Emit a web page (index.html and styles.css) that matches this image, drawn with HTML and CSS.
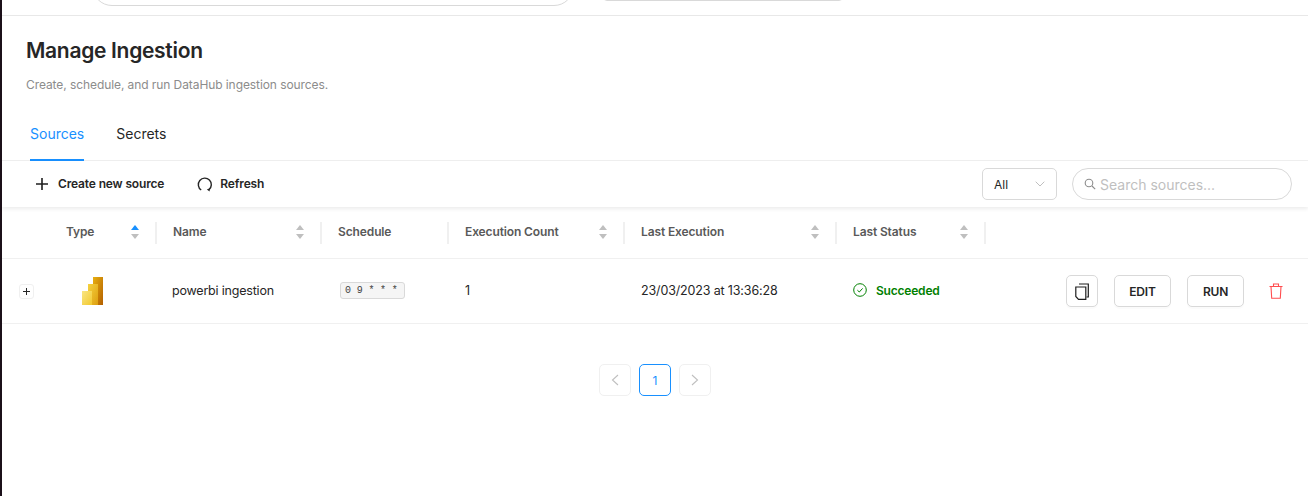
FILE: index.html
```html
<!DOCTYPE html>
<html lang="en">
<head>
    <meta charset="UTF-8">
    <title>Manage Ingestion</title>
    <link rel="stylesheet" href="styles.css">
</head>
<body>
<div class="page">
    <div class="topbar">
        <div class="top-search"></div>
        <div class="top-select"></div>
    </div>
    <div class="heading">
        <h1>Manage Ingestion</h1>
        <p>Create, schedule, and run DataHub ingestion sources.</p>
    </div>
    <div class="tabs">
        <a class="tab active">Sources</a>
        <a class="tab">Secrets</a>
    </div>
    <div class="toolbar">
        <div class="tool-left">
            <a class="tool tool-create">
                <svg width="14" height="14" viewBox="0 0 14 14"><path d="M7 1v12M1 7h12" stroke="#1f1f1f" stroke-width="1.6" fill="none"/></svg>
                <span>Create new source</span>
            </a>
            <a class="tool tool-refresh">
                <svg width="16" height="16" viewBox="0 0 16 16"><path d="M4.200 14A6.500 6.500 0 1 1 12 13.600" stroke="#262626" stroke-width="1.400" fill="none"/><path d="M9.800 13.600l2.800 1.900.3-3.300z" fill="#262626"/></svg>
                <span>Refresh</span>
            </a>
        </div>
        <div class="tool-right">
            <div class="select">
                <span>All</span>
                <svg width="10" height="6" viewBox="0 0 10 6"><path d="M.7.7 5 5 9.3.7" stroke="#bfbfbf" stroke-width="1" fill="none"/></svg>
            </div>
            <div class="search">
                <svg width="12" height="12" viewBox="0 0 12 12"><circle cx="5" cy="5" r="3.8" stroke="#8c8c8c" stroke-width="1.1" fill="none"/><path d="M8 8l3.2 3.2" stroke="#8c8c8c" stroke-width="1.1"/></svg>
                <span>Search sources...</span>
            </div>
        </div>
    </div>
    <div class="cols head">
        <div></div>
        <div class="th"><span>Type</span><i class="sort up-on"></i></div>
        <div class="th"><span>Name</span><i class="sort"></i></div>
        <div class="th"><span>Schedule</span></div>
        <div class="th"><span>Execution Count</span><i class="sort"></i></div>
        <div class="th"><span>Last Execution</span><i class="sort"></i></div>
        <div class="th"><span>Last Status</span><i class="sort"></i></div>
        <div></div>
    </div>
    <div class="cols row">
        <div class="td-expand"><button class="expand">
            <svg width="7" height="7" viewBox="0 0 7 7"><path d="M3.5 0v7M0 3.5h7" stroke="#262626" stroke-width="1" fill="none"/></svg>
        </button></div>
        <div class="td-logo">
            <svg width="21" height="28" viewBox="0 0 21 28">
                <defs>
                    <linearGradient id="pbA" x1="0" y1="0" x2="1" y2="1"><stop offset="0" stop-color="#e8b010"/><stop offset="1" stop-color="#b35f00"/></linearGradient>
                    <linearGradient id="pbB" x1="0" y1="0" x2="1" y2="1"><stop offset="0" stop-color="#f6d23f"/><stop offset="1" stop-color="#dd9f10"/></linearGradient>
                    <linearGradient id="pbC" x1="0" y1="0" x2="1" y2="1"><stop offset="0" stop-color="#f9e583"/><stop offset="1" stop-color="#f2c92f"/></linearGradient>
                </defs>
                <rect x="11" y="0" width="10" height="28" fill="url(#pbA)"/>
                <rect x="6" y="7" width="10" height="21" fill="url(#pbB)"/>
                <rect x="0" y="14" width="10" height="14" fill="url(#pbC)"/>
            </svg>
        </div>
        <div class="td td-name">powerbi ingestion</div>
        <div class="td"><code class="cron">0 9 * * *</code></div>
        <div class="td">1</div>
        <div class="td">23/03/2023 at 13:36:28</div>
        <div class="td status">
            <svg width="14" height="14" viewBox="0 0 14 14"><circle cx="7" cy="7" r="6.3" stroke="#008000" stroke-width="1" fill="none"/><path d="M4.4 7.2 6.3 9l3.3-3.6" stroke="#008000" stroke-width="1" fill="none"/></svg>
            <span>Succeeded</span>
        </div>
        <div class="actions">
            <button class="btn btn-copy">
                <svg width="14" height="17" viewBox="0 0 14 17"><path d="M4 1h9.300v13h-1.800" stroke="#1f1f1f" stroke-width="1.2" fill="none"/><path d="M.8 4h10v12.300H3.500L.8 13.500z" stroke="#1f1f1f" stroke-width="1.2" fill="none"/></svg>
            </button>
            <button class="btn btn-text">EDIT</button>
            <button class="btn btn-text">RUN</button>
            <svg class="trash" width="14" height="16" viewBox="0 0 14 16"><path d="M.5 3.500h13M4.500 3.500V1h5v2.500M2 3.500l.7 11.700h8.600L12 3.500" stroke="#ff4d4f" stroke-width="1.100" fill="none"/></svg>
        </div>
    </div>
    <div class="pager">
        <a class="page-btn off"><svg width="8" height="12" viewBox="0 0 8 12"><path d="M7 1 1.500 6 7 11" stroke="#bfbfbf" stroke-width="1.100" fill="none"/></svg></a>
        <a class="page-btn current">1</a>
        <a class="page-btn off"><svg width="8" height="12" viewBox="0 0 8 12"><path d="M1 1l5.500 5L1 11" stroke="#bfbfbf" stroke-width="1.100" fill="none"/></svg></a>
    </div>
</div>
</body>
</html>
```

FILE: styles.css
```css
*{ margin:0; padding:0; box-sizing:border-box;}
html,body{ height:100%; background:#fff;}
body{ font-family:"Inter","Noto Sans",sans-serif; font-size:13px; color:#262626; overflow:hidden;}
.page{ height:496px; border-left:2px solid #1b1019; background:#fff;}

.topbar{ height:16px; border-bottom:1px solid #e8e8e8; display:flex; align-items:flex-end; padding:0 0 9px 90px; overflow:hidden;}
.top-search{ width:482px; height:40px; flex:none; border:1px solid #d9d9d9; border-radius:20px; background:#fff;}
.top-select{ width:240px; height:30px; flex:none; margin:0 0 5px 29px; border:1px solid #d9d9d9; border-radius:4px;}

.heading{ padding:20px 0 0 24px; height:104px;}
.heading h1{ font-size:21px; line-height:29px; font-weight:600; color:#262626; letter-spacing:-.3px;}
.heading p{ margin-top:11px; font-size:12px; line-height:18px; color:#8c8c8c; letter-spacing:-.08px;}

.tabs{ height:41px; display:flex; padding-left:28px; gap:32px; border-bottom:1px solid #f0f0f0;}
.tab{ height:41px; line-height:28px; font-size:14px; color:#262626;}
.tab.active{ color:#1890ff; border-bottom:2px solid #1890ff;}

.toolbar{ height:46px; display:flex; justify-content:space-between; align-items:center; padding:0 16px 0 33px; box-shadow:0 2px 4px rgba(0,0,0,.08); position:relative; background:#fff;}
.tool-left{ display:flex; align-items:center; gap:33px;}
.tool{ display:flex; align-items:center; font-size:12px; font-weight:600; color:#262626; letter-spacing:-.15px;}
.tool span{ margin-bottom:2px;}
.tool-create svg{ margin-right:9px;}
.tool-refresh svg{ margin-right:7px;}
.tool-right{ display:flex; align-items:center; gap:15px;}
.select{ width:75px; height:32px; border:1px solid #d9d9d9; border-radius:5px; display:flex; align-items:center; justify-content:space-between; padding:0 11px; font-size:12px;}
.search{ width:220px; height:32px; border:1px solid #d9d9d9; border-radius:16px; display:flex; align-items:center; gap:4px; padding-left:11px; font-size:14px; color:#bfbfbf;}

.cols{ display:grid; grid-template-columns:48px 107px 165px 127px 176px 212px 149px 1fr; border-bottom:1px solid #f0f0f0;}
.head{ height:52px; align-items:center;}
.th{ height:22px; padding:0 16px; display:flex; align-items:center; justify-content:space-between; border-right:2px solid #f0f0f0; font-size:12px; font-weight:600; color:#595959; letter-spacing:-.12px;}
.th span{ margin-bottom:2px;}
.sort{ width:9px; height:14px; flex:none; margin:0 -1px 1px 0; position:relative;}
.sort:before,.sort:after{ content:""; position:absolute; left:0; border-left:4.500px solid transparent; border-right:4.500px solid transparent;}
.sort:before{ top:0; border-bottom:5px solid #bfbfbf;}
.sort:after{ bottom:0; border-top:5px solid #bfbfbf;}
.sort.up-on:before{ border-bottom-color:#1890ff;}

.row{ height:65px; align-items:center;}
.td-expand{ padding-left:17px; display:flex;}
.expand{ width:15px; height:15px; border:1px solid #f0f0f0; border-radius:3px; background:#fff; display:flex; align-items:center; justify-content:center;}
.td{ padding:0 0 2px 16px; font-size:12.500px; letter-spacing:-.15px; color:#262626;}
.td-name{ padding-left:15px; letter-spacing:-.2px;}
.td-logo{ padding-left:32px; display:flex;}
.cron{ display:inline-block; margin-left:2px; width:65px; height:17px; line-height:15px; border:1px solid #d9d9d9; border-radius:3px; background:#f5f5f5; font-family:"Liberation Mono",monospace; font-size:10px; padding-left:4px; color:#434343; white-space:pre;}
.status{ display:flex; align-items:center; gap:9px; font-size:12px; font-weight:600; color:#008000; letter-spacing:-.2px;}
.actions{ display:flex; align-items:center; padding-left:80px;}
.btn{ height:32px; background:#fff; border:1px solid #d9d9d9; border-radius:5px; box-shadow:0 2px 0 rgba(0,0,0,.015); color:#262626; font-family:inherit; font-size:12px; font-weight:600; letter-spacing:-.2px; display:flex; align-items:center; justify-content:center;}
.btn-copy{ width:32px;}
.btn-text{ width:57px; margin-left:16px;}
.trash{ margin-left:25px;}

.pager{ display:flex; justify-content:center; gap:8px; padding-top:40px;}
.page-btn{ width:32px; height:32px; border:1px solid #f0f0f0; border-radius:5px; display:flex; align-items:center; justify-content:center; font-size:12px;}
.page-btn.current{ border-color:#1890ff; color:#1890ff;}
```
